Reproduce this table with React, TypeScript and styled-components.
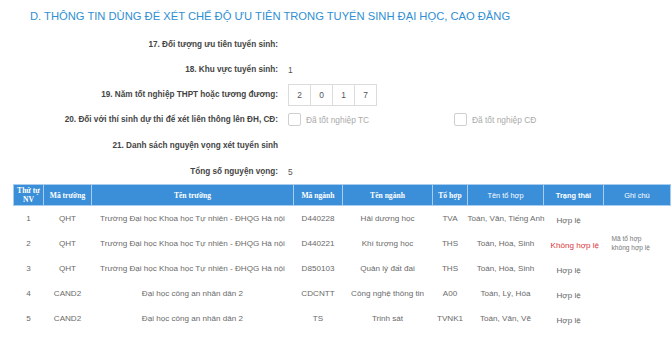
import React from "react";
import styled, { createGlobalStyle } from "styled-components";

const GlobalStyle = createGlobalStyle`
  body {
    margin: 0;
    background: #ffffff;
    font-family: "Liberation Sans", Arial, sans-serif;
  }
`;

const Page = styled.div`
  width: 672px;
  height: 340px;
  overflow: hidden;
  background: #ffffff;
`;

const Title = styled.h2`
  margin: 0;
  height: 32px;
  padding-left: 30px;
  display: flex;
  align-items: center;
  font-family: "Liberation Sans", Arial, sans-serif;
  font-weight: 400;
  font-size: 11.2px;
  color: #2f8fd2;
`;

const Form = styled.div`
  display: grid;
  grid-template-columns: 278px 1fr;
  column-gap: 10px;
`;

const Label = styled.div<{ $tall?: boolean }>`
  height: ${(p) => (p.$tall ? 27 : 25)}px;
  display: flex;
  align-items: center;
  justify-content: flex-end;
  font-size: 8.2px;
  font-weight: 700;
  color: #444;
`;

const Value = styled.div<{ $tall?: boolean }>`
  height: ${(p) => (p.$tall ? 27 : 25)}px;
  display: flex;
  align-items: center;
  font-size: 8.4px;
  color: #555;
`;

const YearBoxes = styled.div`
  display: flex;
`;

const YearBox = styled.div`
  width: 21px;
  height: 20px;
  border: 1px solid #dcdcdc;
  margin-left: -1px;
  display: flex;
  align-items: center;
  justify-content: center;
  font-size: 8.4px;
  color: #555;
  &:first-child {
    margin-left: 0;
  }
`;

const CheckGroup = styled.label<{ $width?: number }>`
  display: flex;
  align-items: center;
  gap: 5px;
  width: ${(p) => p.$width ?? 0}px;
  font-size: 8.4px;
  color: #aaa;
`;

const Check = styled.span`
  width: 11px;
  height: 11px;
  border: 1px solid #cfcfcf;
  border-radius: 2px;
  background: #fff;
`;

const Table = styled.table`
  margin-left: 13px;
  width: 657px;
  border-collapse: collapse;
  table-layout: fixed;
`;

const Col = styled.col<{ $w: number }>`
  width: ${(p) => p.$w}px;
`;

const Th = styled.th<{ $sans?: boolean; $light?: boolean }>`
  box-sizing: border-box;
  height: 21px;
  padding: 0;
  background: #3b8fd9;
  border: 1px solid #a8cdef;
  color: #ffffff;
  font-family: ${(p) =>
    p.$sans
      ? '"Liberation Sans", Arial, sans-serif'
      : '"Liberation Serif", "Times New Roman", serif'};
  font-weight: ${(p) => (p.$light ? 400 : 700)};
  font-size: ${(p) => (p.$sans ? 7.4 : 7.6)}px;
  line-height: 9px;
  text-align: center;
`;

const Td = styled.td`
  box-sizing: border-box;
  height: 25px;
  padding: 0;
  text-align: center;
  font-size: 8.1px;
  color: #6a6a6a;
  white-space: nowrap;
`;

const StatusCell = styled.td`
  box-sizing: border-box;
  height: 25px;
  padding: 0 0 0 7px;
  text-align: left;
  white-space: nowrap;
`;

const Status = styled.span<{ $invalid?: boolean }>`
  font-size: 8.1px;
  color: ${(p) => (p.$invalid ? "#d9363e" : "#666")};
  padding-left: ${(p) => (p.$invalid ? 0 : 6)}px;
`;

const Note = styled.td`
  box-sizing: border-box;
  padding: 0 0 0 8px;
  font-size: 6.6px;
  line-height: 9px;
  color: #777;
  text-align: left;
`;

type Row = {
  no: number;
  school: string;
  schoolName: string;
  major: string;
  majorName: string;
  combo: string;
  comboName: string;
  valid: boolean;
  note?: string[];
};

const rows: Row[] = [
  {
    no: 1,
    school: "QHT",
    schoolName: "Trường Đại học Khoa học Tự nhiên - ĐHQG Hà nội",
    major: "D440228",
    majorName: "Hải dương học",
    combo: "TVA",
    comboName: "Toán, Văn, Tiếng Anh",
    valid: true,
  },
  {
    no: 2,
    school: "QHT",
    schoolName: "Trường Đại học Khoa học Tự nhiên - ĐHQG Hà nội",
    major: "D440221",
    majorName: "Khí tượng học",
    combo: "THS",
    comboName: "Toán, Hóa, Sinh",
    valid: false,
    note: ["Mã tổ hợp", "không hợp lệ"],
  },
  {
    no: 3,
    school: "QHT",
    schoolName: "Trường Đại học Khoa học Tự nhiên - ĐHQG Hà nội",
    major: "D850103",
    majorName: "Quản lý đất đai",
    combo: "THS",
    comboName: "Toán, Hóa, Sinh",
    valid: true,
  },
  {
    no: 4,
    school: "CAND2",
    schoolName: "Đại học công an nhân dân 2",
    major: "CDCNTT",
    majorName: "Công nghệ thông tin",
    combo: "A00",
    comboName: "Toán, Lý, Hóa",
    valid: true,
  },
  {
    no: 5,
    school: "CAND2",
    schoolName: "Đại học công an nhân dân 2",
    major: "TS",
    majorName: "Trinh sát",
    combo: "TVNK1",
    comboName: "Toán, Văn, Vẽ",
    valid: true,
  },
];

const widths = [30, 48, 202, 49, 90, 35, 76, 60, 67];

export default function App() {
  return (
    <Page>
      <GlobalStyle />
      <Title>
        D. THÔNG TIN DÙNG ĐỂ XÉT CHẾ ĐỘ ƯU TIÊN TRONG TUYỂN SINH ĐẠI HỌC, CAO ĐẲNG
      </Title>
      <Form>
        <Label>17. Đối tượng ưu tiên tuyển sinh:</Label>
        <Value />
        <Label>18. Khu vực tuyển sinh:</Label>
        <Value>1</Value>
        <Label>19. Năm tốt nghiệp THPT hoặc tương đương:</Label>
        <Value>
          <YearBoxes>
            {["2", "0", "1", "7"].map((d, i) => (
              <YearBox key={i}>{d}</YearBox>
            ))}
          </YearBoxes>
        </Value>
        <Label>20. Đối với thí sinh dự thi để xét liên thông lên ĐH, CĐ:</Label>
        <Value>
          <CheckGroup $width={166}>
            <Check />
            Đã tốt nghiệp TC
          </CheckGroup>
          <CheckGroup $width={120}>
            <Check />
            Đã tốt nghiệp CĐ
          </CheckGroup>
        </Value>
        <Label $tall>21. Danh sách nguyện vọng xét tuyển sinh</Label>
        <Value $tall />
        <Label>Tổng số nguyện vọng:</Label>
        <Value>5</Value>
      </Form>
      <Table>
        <colgroup>
          {widths.map((w, i) => (
            <Col key={i} $w={w} />
          ))}
        </colgroup>
        <thead>
          <tr>
            <Th>
              Thứ tự
              <br />
              NV
            </Th>
            <Th>Mã trường</Th>
            <Th>Tên trường</Th>
            <Th>Mã ngành</Th>
            <Th>Tên ngành</Th>
            <Th>Tổ hợp</Th>
            <Th $sans $light>
              Tên tổ hợp
            </Th>
            <Th $sans>Trạng thái</Th>
            <Th $sans $light>
              Ghi chú
            </Th>
          </tr>
        </thead>
        <tbody>
          {rows.map((r) => (
            <tr key={r.no}>
              <Td>{r.no}</Td>
              <Td>{r.school}</Td>
              <Td>{r.schoolName}</Td>
              <Td>{r.major}</Td>
              <Td>{r.majorName}</Td>
              <Td>{r.combo}</Td>
              <Td>{r.comboName}</Td>
              <StatusCell>
                <Status $invalid={!r.valid}>
                  {r.valid ? "Hợp lệ" : "Không hợp lệ"}
                </Status>
              </StatusCell>
              <Note>
                {r.note?.map((line) => (
                  <div key={line}>{line}</div>
                ))}
              </Note>
            </tr>
          ))}
        </tbody>
      </Table>
    </Page>
  );
}
